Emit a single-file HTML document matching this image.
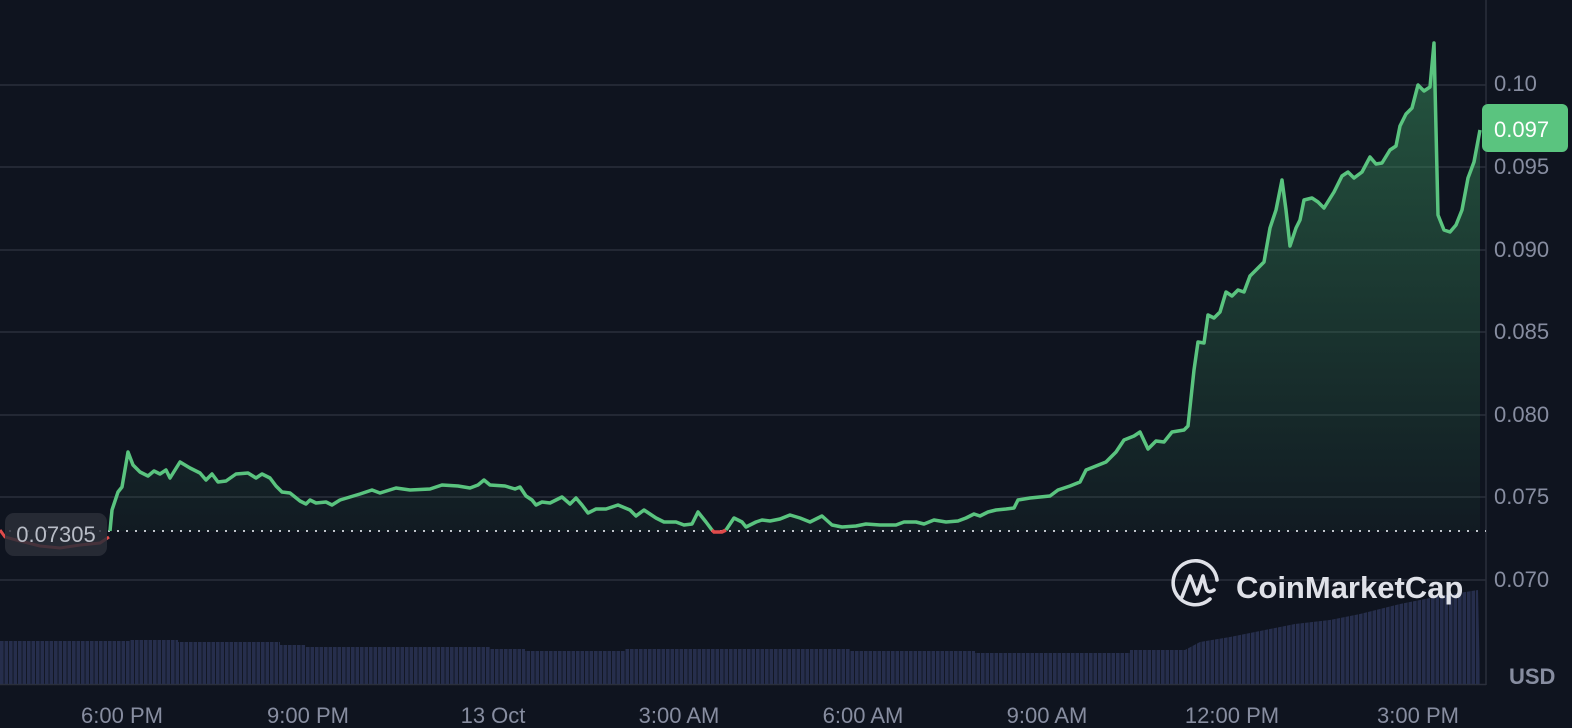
<!DOCTYPE html>
<html><head><style>
html,body{margin:0;padding:0;background:#0f141f;width:1572px;height:728px;overflow:hidden;font-family:"Liberation Sans",sans-serif;}
svg{position:absolute;left:0;top:0}
</style></head><body>
<svg width="1572" height="728" viewBox="0 0 1572 728">
<defs>
<linearGradient id="g" gradientUnits="userSpaceOnUse" x1="0" y1="40" x2="0" y2="531">
<stop offset="0" stop-color="#3c9a62" stop-opacity="0.5"/>
<stop offset="1" stop-color="#3c9a62" stop-opacity="0.05"/>
</linearGradient>
<pattern id="vb" width="4.5" height="10" patternUnits="userSpaceOnUse">
<rect width="3.6" height="10" fill="#262e4c"/>
</pattern>
</defs>
<g stroke="#2a2f3b" stroke-width="1.5">
<line x1="0" y1="85" x2="1486" y2="85"/><line x1="0" y1="167" x2="1486" y2="167"/>
<line x1="0" y1="250" x2="1486" y2="250"/><line x1="0" y1="332" x2="1486" y2="332"/>
<line x1="0" y1="415" x2="1486" y2="415"/><line x1="0" y1="497" x2="1486" y2="497"/>
<line x1="0" y1="580" x2="1486" y2="580"/>
<line x1="1486" y1="0" x2="1486" y2="685"/>
<line x1="0" y1="684.5" x2="1486" y2="684.5"/>
</g>
<polygon fill="url(#g)" points="110,531 112,510 118,492 122,487 128,452 133,465 140,472 148,476 154,471 160,474 166,470 170,478 180,462 190,468 200,473 206,480 212,474 218,482 226,481 236,474 248,473 256,478 262,474 270,478 276,486 282,492 290,493 300,501 306,504 310,500 316,503 326,502 332,505 340,500 350,497 360,494 372,490 380,493 396,488 410,490 430,489 442,485 458,486 470,488 478,485 484,480 490,485 505,486 515,489 520,487 526,496 532,500 536,505 542,502 550,503 556,500 562,497 570,504 576,498 582,505 588,513 596,509 606,509 618,505 630,510 636,516 644,510 656,518 664,522 676,522 684,525 692,524 698,512 706,522 714,531 722,531 734,518 742,522 746,527 756,522 762,520 770,521 780,519 790,515 800,518 810,522 822,516 832,525 842,527 856,526 866,524 880,525 896,525 904,522 916,522 924,524 934,520 946,522 958,521 966,518 974,514 980,516 988,512 996,510 1006,509 1014,508 1018,500 1030,498 1050,496 1058,490 1070,486 1080,482 1086,470 1096,466 1106,462 1116,452 1124,440 1134,436 1140,432 1148,449 1156,441 1164,442 1172,432 1184,430 1188,426 1194,370 1198,342 1204,343 1208,315 1214,318 1220,312 1226,292 1232,296 1238,290 1244,292 1250,276 1256,270 1264,262 1270,228 1276,210 1282,180 1286,210 1290,246 1296,228 1300,220 1304,200 1312,198 1318,202 1324,208 1334,192 1342,176 1348,172 1354,178 1362,172 1370,157 1376,164 1382,163 1390,150 1396,146 1400,126 1406,114 1412,108 1418,85 1424,91 1430,87 1434,43 1438,215 1444,230 1450,232 1456,225 1462,210 1468,178 1474,162 1480,130 1480,531 110,531"/>
<polygon fill="url(#vb)" points="0,641 130,641 130,640 178,640 178,642 280,642 280,645 305,645 305,647 490,647 490,649 525,649 525,651 625,651 625,649 850,649 850,651 975,651 975,653 1130,653 1130,650 1185,650 1200,642 1230,637 1260,631 1295,624 1330,620 1360,614 1400,604 1440,596 1478,590 1480,684 0,684"/>
<line x1="0" y1="531" x2="1486" y2="531" stroke="#c0c4cc" stroke-width="2" stroke-dasharray="2 7"/>
<polyline fill="none" stroke="#e04b4b" stroke-width="3" points="0,530 5,537 20,541 40,546 60,548 80,545 100,543 109,537"/>
<polyline fill="none" stroke="#5ac47f" stroke-width="3.5" stroke-linejoin="round" points="110,531 112,510 118,492 122,487 128,452 133,465 140,472 148,476 154,471 160,474 166,470 170,478 180,462 190,468 200,473 206,480 212,474 218,482 226,481 236,474 248,473 256,478 262,474 270,478 276,486 282,492 290,493 300,501 306,504 310,500 316,503 326,502 332,505 340,500 350,497 360,494 372,490 380,493 396,488 410,490 430,489 442,485 458,486 470,488 478,485 484,480 490,485 505,486 515,489 520,487 526,496 532,500 536,505 542,502 550,503 556,500 562,497 570,504 576,498 582,505 588,513 596,509 606,509 618,505 630,510 636,516 644,510 656,518 664,522 676,522 684,525 692,524 698,512 706,522 712,530"/>
<polyline fill="none" stroke="#e04b4b" stroke-width="3.5" points="712,530 714,532 722,532 726,530"/>
<polyline fill="none" stroke="#5ac47f" stroke-width="3.5" stroke-linejoin="round" points="726,530 734,518 742,522 746,527 756,522 762,520 770,521 780,519 790,515 800,518 810,522 822,516 832,525 842,527 856,526 866,524 880,525 896,525 904,522 916,522 924,524 934,520 946,522 958,521 966,518 974,514 980,516 988,512 996,510 1006,509 1014,508 1018,500 1030,498 1050,496 1058,490 1070,486 1080,482 1086,470 1096,466 1106,462 1116,452 1124,440 1134,436 1140,432 1148,449 1156,441 1164,442 1172,432 1184,430 1188,426 1194,370 1198,342 1204,343 1208,315 1214,318 1220,312 1226,292 1232,296 1238,290 1244,292 1250,276 1256,270 1264,262 1270,228 1276,210 1282,180 1286,210 1290,246 1296,228 1300,220 1304,200 1312,198 1318,202 1324,208 1334,192 1342,176 1348,172 1354,178 1362,172 1370,157 1376,164 1382,163 1390,150 1396,146 1400,126 1406,114 1412,108 1418,85 1424,91 1430,87 1434,43 1438,215 1444,230 1450,232 1456,225 1462,210 1468,178 1474,162 1480,130"/>
<rect x="5" y="513" width="102" height="43" rx="9" fill="#2a2e38" fill-opacity="0.85"/>
<text x="56" y="542" fill="#b8bcc6" font-size="22" text-anchor="middle">0.07305</text>
<g fill="#878da0" font-size="22">
<text x="1494" y="91">0.10</text>
<text x="1494" y="174">0.095</text>
<text x="1494" y="257">0.090</text>
<text x="1494" y="339">0.085</text>
<text x="1494" y="422">0.080</text>
<text x="1494" y="504">0.075</text>
<text x="1494" y="587">0.070</text>
<text x="1509" y="684" font-weight="bold">USD</text>
</g>
<rect x="1482" y="104" width="86" height="48" rx="6" fill="#5ac47f"/>
<text x="1494" y="137" fill="#fff" font-size="22">0.097</text>
<g fill="#878da0" font-size="22" text-anchor="middle">
<text x="122" y="723">6:00 PM</text><text x="308" y="723">9:00 PM</text>
<text x="493" y="723">13 Oct</text><text x="679" y="723">3:00 AM</text>
<text x="863" y="723">6:00 AM</text><text x="1047" y="723">9:00 AM</text>
<text x="1232" y="723">12:00 PM</text><text x="1418" y="723">3:00 PM</text>
</g>
<g stroke="#dfe1e8" stroke-width="3.6" fill="none" stroke-linecap="round" stroke-linejoin="round">
<path d="M1210,599 A22,22 0 1 1 1217,580"/>
<path d="M1182,597 L1190,576 L1197,594 L1203,576 L1206,588 Q1208,594 1214,590"/>
</g>
<text x="1236" y="598" fill="#dfe1e8" font-size="31" font-weight="bold">CoinMarketCap</text>
</svg>
</body></html>
